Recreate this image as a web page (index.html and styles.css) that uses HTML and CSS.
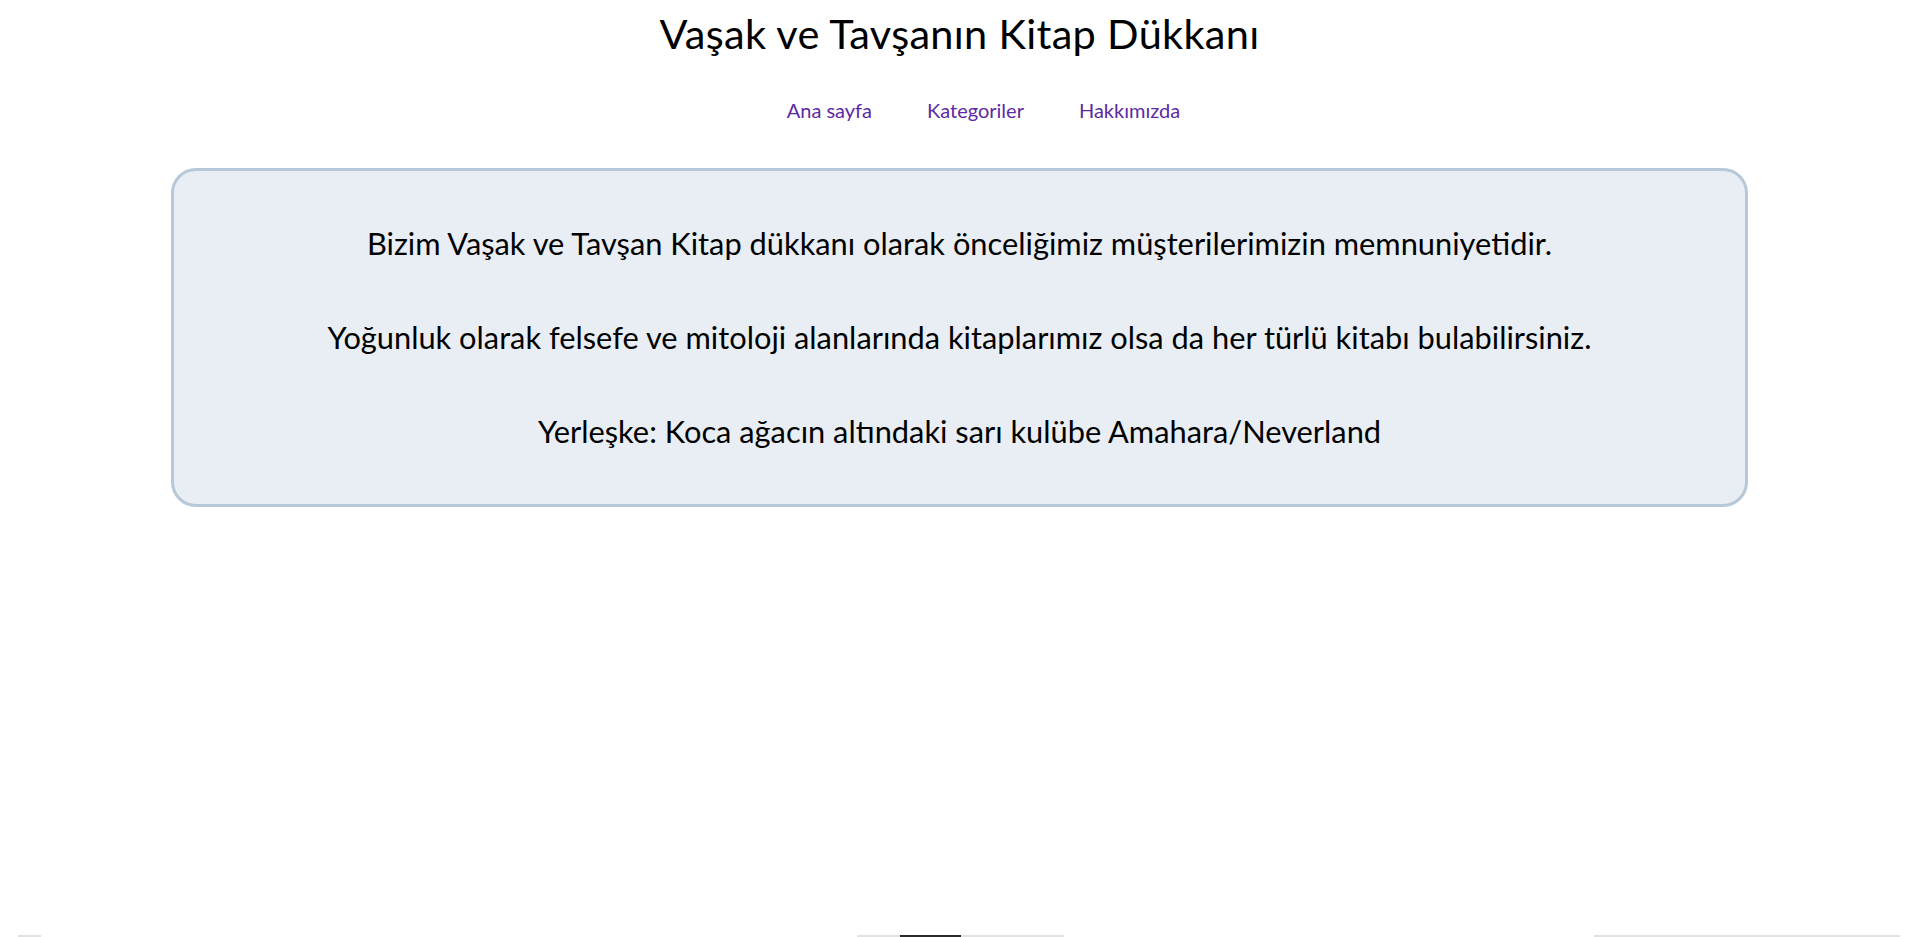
FILE: index.html
```html
<!DOCTYPE html>
<html lang="tr">
<head>
<meta charset="utf-8">
<title>Vaşak ve Tavşanın Kitap Dükkanı</title>
<link rel="stylesheet" href="styles.css">
</head>
<body>
<header class="site-header">
  <h1 class="site-title">Vaşak ve Tavşanın Kitap Dükkanı</h1>
  <nav class="site-nav">
    <a href="#" class="nav-link">Ana sayfa</a>
    <a href="#" class="nav-link">Kategoriler</a>
    <a href="#" class="nav-link">Hakkımızda</a>
  </nav>
</header>
<main class="content">
  <section class="about-box">
    <p class="about-text">Bizim Vaşak ve Tavşan Kitap dükkanı olarak önceliğimiz müşterilerimizin memnuniyetidir.</p>
    <p class="about-text">Yoğunluk olarak felsefe ve mitoloji alanlarında kitaplarımız olsa da her türlü kitabı bulabilirsiniz.</p>
    <p class="about-text">Yerleşke: Koca ağacın altındaki sarı kulübe Amahara/Neverland</p>
  </section>
</main>
<div class="bottom-bars">
  <span class="bar bar-a"></span>
  <span class="bar bar-b"><span class="bar-fill"></span></span>
  <span class="bar bar-c"></span>
</div>
</body>
</html>
```
FILE: styles.css
```css
html, body {
  margin: 0;
  padding: 0;
  background: #ffffff;
}
body {
  font-family: Lato, "Open Sans", sans-serif;
  color: #000;
}
.site-header {
  display: flex;
  flex-direction: column;
  align-items: center;
}
.site-title {
  margin: 9px 0 0;
  font-size: 41.5px;
  font-weight: 400;
  line-height: 48px;
  letter-spacing: 0.3px;
}
.site-nav {
  display: flex;
  gap: 55px;
  margin-top: 41px;
  padding-left: 48px;
}
.nav-link {
  font-size: 20px;
  line-height: 24px;
  color: #5d2aa3;
  text-decoration: none;
}
.content {
  padding: 46px 171px 0;
}
.about-box {
  background: #e9eef5;
  border: 3px solid #b7c9d8;
  border-radius: 25px;
  padding: 45px 20px 44px;
  text-align: center;
}
.about-text {
  margin: 38px 0 0;
  font-size: 30.8px;
  line-height: 56px;
}
.about-text:first-child {
  margin-top: 0;
}
.bottom-bars {
  position: fixed;
  left: 0;
  right: 0;
  bottom: 0;
  height: 2px;
}
.bar {
  position: absolute;
  top: 0;
  height: 2px;
  background: #e2e2e2;
}
.bar-a { left: 18px; width: 23px; }
.bar-b { left: 857px; width: 207px; }
.bar-fill { position: absolute; left: 43px; width: 61px; top: 0; height: 2px; background: #2b2b2b; }
.bar-c { left: 1594px; width: 306px; }
```
